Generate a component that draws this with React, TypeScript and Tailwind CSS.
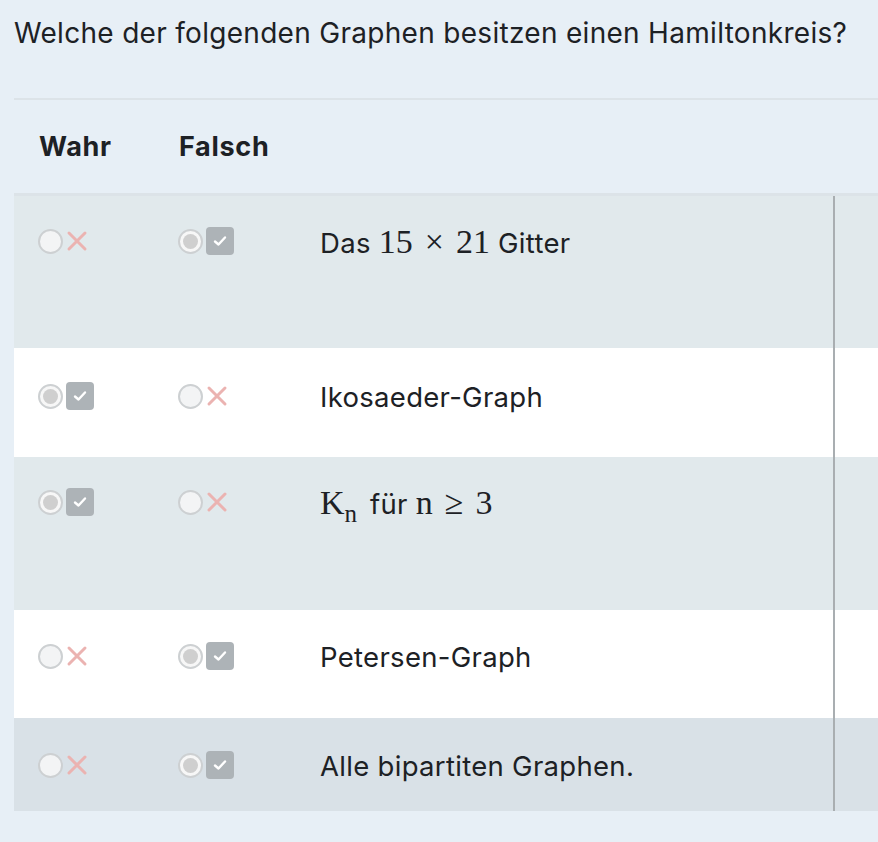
import React from "react";

function RadioOff() {
  return <span className="inline-block w-[25px] h-[25px] rounded-full border-2 border-[#cdd0d2] bg-[#f3f4f5] shrink-0" />;
}
function RadioOn() {
  return (
    <span className="flex items-center justify-center w-[25px] h-[25px] rounded-full border-2 border-[#cdd0d2] bg-[#f7f7f7] shrink-0">
      <span className="w-[15px] h-[15px] rounded-full bg-[#cfcfcf]" />
    </span>
  );
}
function XMark() {
  return (
    <svg width="22" height="22" viewBox="0 0 22 22" className="shrink-0">
      <path d="M3 3 L19 19 M19 3 L3 19" stroke="#ebb3b1" strokeWidth="3" strokeLinecap="round" />
    </svg>
  );
}
function CheckBox() {
  return (
    <span className="flex items-center justify-center w-[28px] h-[28px] rounded-[4px] bg-[#adb3b7] shrink-0">
      <svg width="16" height="16" viewBox="0 0 16 16">
        <path d="M3 8.5 L6.5 11.5 L13 4.5" stroke="#ffffff" strokeWidth="2.4" fill="none" strokeLinecap="round" strokeLinejoin="round" />
      </svg>
    </span>
  );
}

function Choice({ on }: { on: boolean }) {
  return (
    <div className="flex items-center gap-[3px] h-[28px]">
      {on ? <RadioOn /> : <RadioOff />}
      {on ? <CheckBox /> : <XMark />}
    </div>
  );
}

const serif = "font-['Liberation_Serif','Times_New_Roman',serif] tracking-normal";

type Row = { wahr: boolean; h: string; pt: string; bg: string; content: React.ReactNode };

const rows: Row[] = [
  {
    wahr: false,
    h: "h-[152px]",
    pt: "pt-[31px]",
    bg: "bg-[#e1e9ec]",
    content: (
      <span>
        Das{" "}
        <span className={`${serif} text-[34px]`}>
          15<span className="mx-[12px]">×</span>21
        </span>{" "}
        Gitter
      </span>
    ),
  },
  { wahr: true, h: "h-[109px]", pt: "pt-[34px]", bg: "bg-white", content: <span>Ikosaeder-Graph</span> },
  {
    wahr: true,
    h: "h-[153px]",
    pt: "pt-[31px]",
    bg: "bg-[#e1e9ec]",
    content: (
      <span>
        <span className={`${serif} text-[34px]`}>
          K<span className="text-[25px] relative top-[8px]">n</span>
        </span>
        <span className="ml-[13px]">für</span>{" "}
        <span className={`${serif} text-[34px]`}>
          n<span className="mx-[12px]">≥</span>3
        </span>
      </span>
    ),
  },
  { wahr: false, h: "h-[108px]", pt: "pt-[32px]", bg: "bg-white", content: <span>Petersen-Graph</span> },
  { wahr: false, h: "h-[93px]", pt: "pt-[33px]", bg: "bg-[#d9e1e7]", content: <span>Alle bipartiten Graphen.</span> },
];

export default function App() {
  return (
    <div className="w-[878px] h-[842px] overflow-hidden bg-[#e7eff6] font-['Inter','Liberation_Sans',sans-serif] text-[#1d2125]">
      <div className="pl-[14px]">
        <div className="pt-[16px] h-[98px] text-[28px] leading-[34px] tracking-[0.3px] whitespace-nowrap">
          Welche der folgenden Graphen besitzen einen Hamiltonkreis?
        </div>
        <div className="w-[900px]">
          <div className="h-[98px] border-t-2 border-b-[3px] border-[#dce3e8] flex items-center font-bold text-[27px] tracking-[0.7px]">
            <div className="w-[140px] pl-[25px] pt-[2px]">Wahr</div>
            <div className="w-[142px] pl-[25px] pt-[2px]">Falsch</div>
          </div>
          {rows.map((r, i) => (
            <div key={i} className={`flex ${r.h} ${r.bg}`}>
              <div className={`w-[140px] pl-[24px] ${r.pt}`}>
                <Choice on={r.wahr} />
              </div>
              <div className={`w-[142px] pl-[24px] ${r.pt}`}>
                <Choice on={!r.wahr} />
              </div>
              <div className={`w-[539px] pl-[24px] ${r.pt} border-r-2 border-[#a9aeb1] text-[27.5px] leading-[30px] tracking-[0.3px] whitespace-nowrap`}>
                {r.content}
              </div>
              <div className="flex-1" />
            </div>
          ))}
        </div>
      </div>
    </div>
  );
}
